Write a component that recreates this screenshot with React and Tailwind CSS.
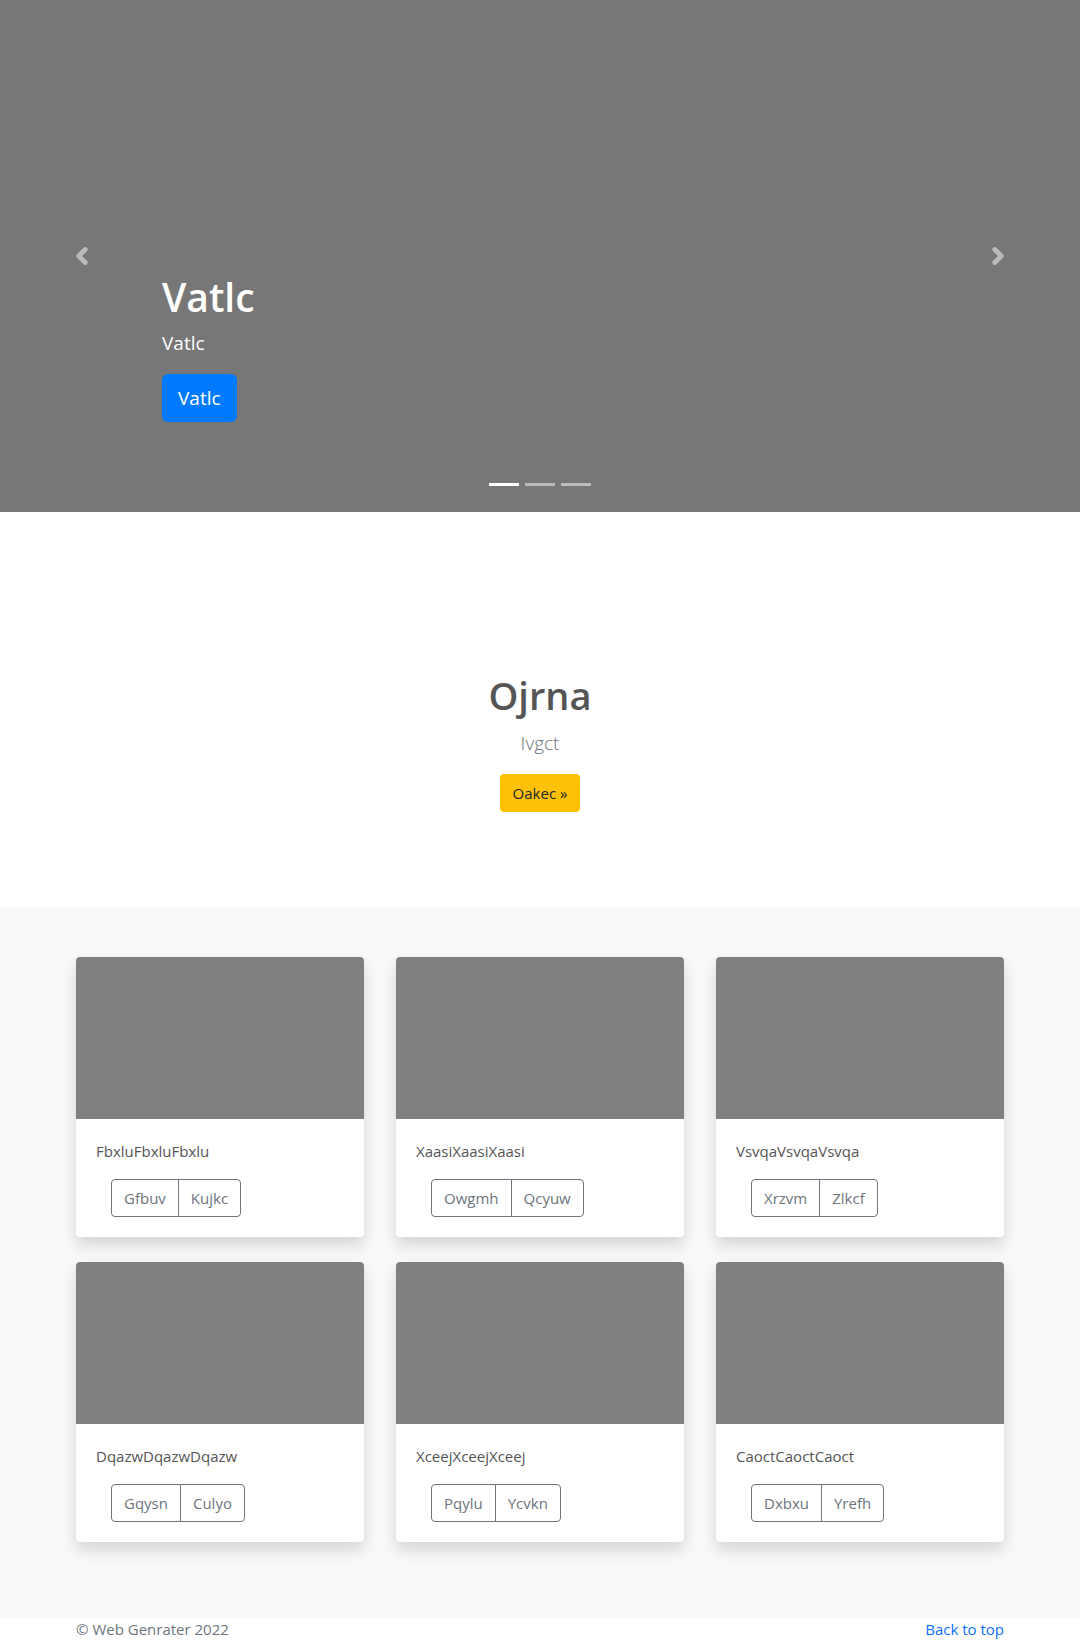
import { ChevronLeft, ChevronRight } from 'lucide-react'

const cards = [
  { title: 'FbxluFbxluFbxlu', a: 'Gfbuv', b: 'Kujkc' },
  { title: 'XaasiXaasiXaasi', a: 'Owgmh', b: 'Qcyuw' },
  { title: 'VsvqaVsvqaVsvqa', a: 'Xrzvm', b: 'Zlkcf' },
  { title: 'DqazwDqazwDqazw', a: 'Gqysn', b: 'Culyo' },
  { title: 'XceejXceejXceej', a: 'Pqylu', b: 'Ycvkn' },
  { title: 'CaoctCaoctCaoct', a: 'Dxbxu', b: 'Yrefh' },
]

export default function App() {
  return (
    <div className="font-['Open_Sans',sans-serif] text-[#212529]">
      {/* Carousel */}
      <div className="relative h-[512px] bg-[#777777]">
        <button className="absolute left-[69px] top-[243px] text-white/50">
          <ChevronLeft className="h-[26px] w-[26px]" strokeWidth={4.5} />
        </button>
        <button className="absolute right-[69px] top-[243px] text-white/50">
          <ChevronRight className="h-[26px] w-[26px]" strokeWidth={4.5} />
        </button>

        <div className="mx-auto w-[960px] px-[12px] pt-[274px]">
          <div className="pl-[90px] text-white">
            <h1 className="text-[39px] font-semibold leading-[1.2]">Vatlc</h1>
            <p className="mt-[8px] text-[19px] leading-[1.5]">Vatlc</p>
            <button className="mt-[17px] rounded-[6px] bg-[#007bff] px-[16px] py-[9px] text-[19px] leading-[30px]">
              Vatlc
            </button>
          </div>
        </div>

        <div className="absolute bottom-[26px] left-0 right-0 flex justify-center gap-[6px]">
          <span className="h-[3px] w-[30px] bg-white" />
          <span className="h-[3px] w-[30px] bg-white/50" />
          <span className="h-[3px] w-[30px] bg-white/50" />
        </div>
      </div>

      {/* Marketing */}
      <section className="flex h-[395px] flex-col items-center pt-[161px] text-center">
        <h2 className="text-[38px] font-semibold leading-[1.2] text-[#555555]">Ojrna</h2>
        <p className="mt-[10px] text-[19px] font-light leading-[28px] text-[#6c757d]">Ivgct</p>
        <button className="mt-[17px] rounded-[4px] bg-[#ffc107] px-[13px] py-[6px] text-[15px] leading-[26px] text-[#212529]">
          Oakec »
        </button>
      </section>

      {/* Album */}
      <section className="bg-[#f8f9fa] pt-[50px] pb-[75px]">
        <div className="mx-auto grid w-[928px] grid-cols-3 gap-x-[32px] gap-y-[25px]">
          {cards.map((c) => (
            <div key={c.title} className="overflow-hidden rounded-[4px] bg-white shadow-[0_8px_16px_rgba(0,0,0,0.15)]">
              <div className="h-[162px] bg-[#808080]" />
              <div className="px-[20px] pt-[20px] pb-[20px]">
                <p className="text-[15px] leading-[24px] text-[#555555]">{c.title}</p>
                <div className="ml-[15px] mt-[16px] inline-flex rounded-[4px] border border-[#6c757d] text-[15px] leading-[24px] text-[#6c757d]">
                  <button className="px-[12px] py-[6px]">{c.a}</button>
                  <button className="border-l border-[#6c757d] px-[12px] py-[6px]">{c.b}</button>
                </div>
              </div>
            </div>
          ))}
        </div>
      </section>

      {/* Footer */}
      <footer className="mx-auto flex w-[928px] justify-between pb-[48px] text-[15px] leading-[24px]">
        <p className="text-[#6c757d]">© Web Genrater 2022</p>
        <a href="#" className="text-[#0d6efd]">Back to top</a>
      </footer>
    </div>
  )
}
